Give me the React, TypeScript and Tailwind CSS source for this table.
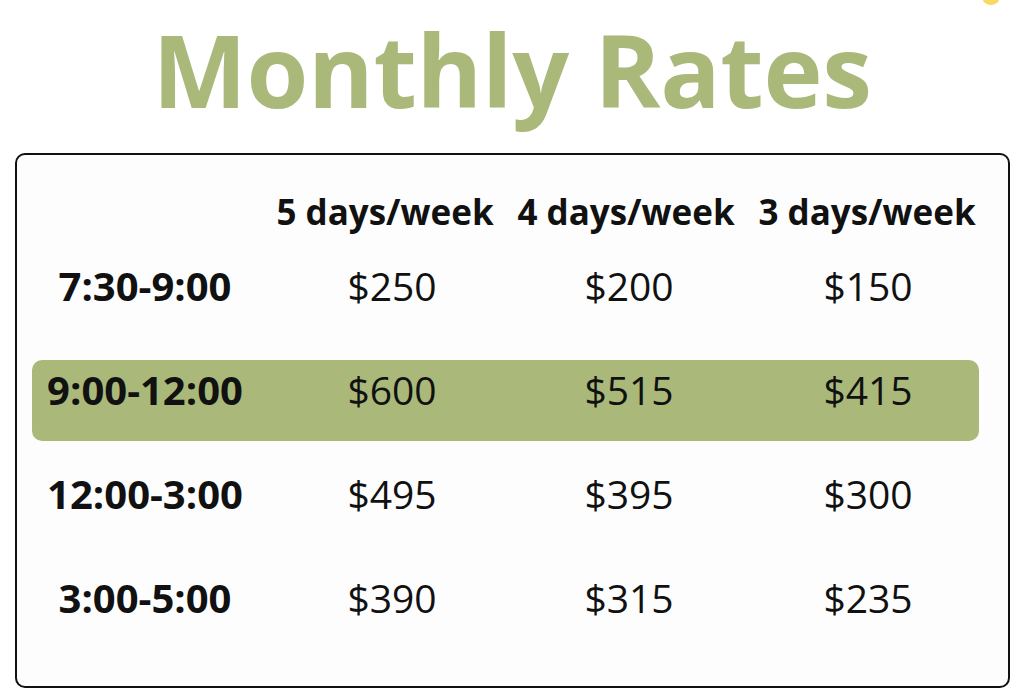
import React from "react";

const headers = ["5 days/week", "4 days/week", "3 days/week"];

const rows = [
  { time: "7:30-9:00", prices: ["$250", "$200", "$150"] },
  { time: "9:00-12:00", prices: ["$600", "$515", "$415"], highlight: true },
  { time: "12:00-3:00", prices: ["$495", "$395", "$300"] },
  { time: "3:00-5:00", prices: ["$390", "$315", "$235"] },
];

// column grids: headers sit a touch left of the prices under them
const headGrid = "grid grid-cols-[226px_254px_228px_1fr] items-center";
const headCls = ["text-center whitespace-nowrap", "text-center whitespace-nowrap", "text-center whitespace-nowrap pl-[15px]"];
const grid = "grid grid-cols-[226px_268px_206px_1fr] items-center";
const cellCls = ["text-center whitespace-nowrap", "text-center whitespace-nowrap", "text-center whitespace-nowrap pl-[25px]"];

export default function App() {
  return (
    <div
      className="relative w-[1024px] h-[700px] bg-white overflow-hidden text-[#111]"
      style={{ fontFamily: '"Open Sans", "Noto Sans", sans-serif' }}
    >
      <div className="absolute right-[24px] -top-[12px] w-[18px] h-[17px] rounded-full bg-[#f8d966]" />

      <div className="h-[153px] text-center">
        <h1 className="text-[100px] leading-[138px] font-bold text-[#aab97a] tracking-[-0.3px]">Monthly Rates</h1>
      </div>

      <div className="ml-[15px] w-[995px] h-[535px] border-2 border-[#111] rounded-[10px] bg-[#fdfdfd] pt-[31px] pl-[15px] pr-[29px]">
        <div className={`${headGrid} h-[48px] text-[35px] font-bold`}>
          <div />
          {headers.map((h, i) => (
            <div key={h} className={headCls[i]}>
              {h}
            </div>
          ))}
        </div>

        {rows.map((r) =>
          r.highlight ? (
            <div key={r.time} className="h-[104px] pt-[22px]">
              <div className={`${grid} h-[81px] pb-[21px] rounded-[10px] bg-[#aab97a]`}>
                <div className="text-center whitespace-nowrap text-[40px] font-bold">{r.time}</div>
                {r.prices.map((p, i) => (
                  <div key={i} className={`${cellCls[i]} text-[39px]`}>
                    {p}
                  </div>
                ))}
              </div>
            </div>
          ) : (
            <div key={r.time} className={`${grid} h-[104px]`}>
              <div className="text-center whitespace-nowrap text-[40px] font-bold">{r.time}</div>
              {r.prices.map((p, i) => (
                <div key={i} className={`${cellCls[i]} text-[39px]`}>
                  {p}
                </div>
              ))}
            </div>
          )
        )}
      </div>
    </div>
  );
}
